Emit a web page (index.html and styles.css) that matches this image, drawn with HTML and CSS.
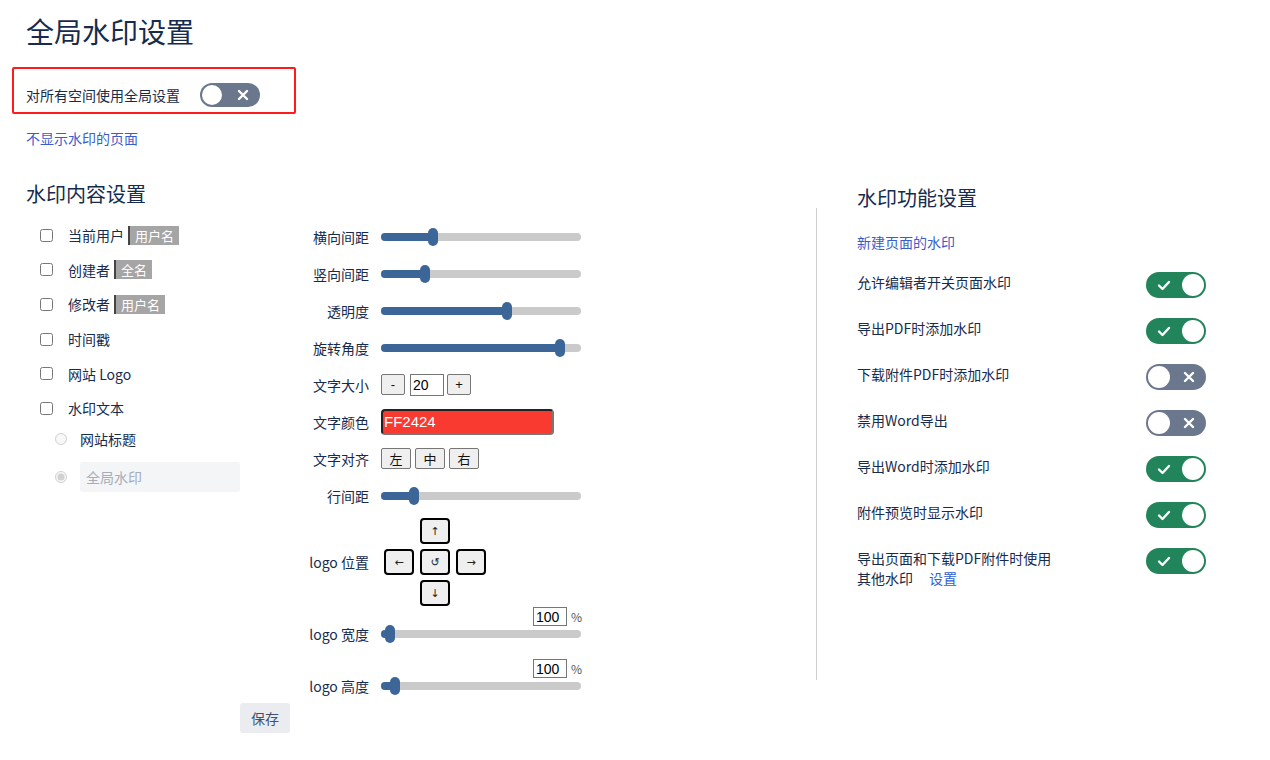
FILE: index.html
```html
<!DOCTYPE html>
<html lang="zh-CN">

<head>
    <meta charset="UTF-8">
    <meta name="viewport" content="width=device-width, initial-scale=1.0">
    <title>全局水印设置</title>
    <link rel="stylesheet" href="styles.css">
</head>

<body>
    <div class="page">
        <h1 class="page-title">全局水印设置</h1>

        <div class="global-switch">
            <span>对所有空间使用全局设置</span>
            <span class="toggle toggle-off toggle-sm">
                <span class="knob"></span>
                <svg class="toggle-icon" viewBox="0 0 20 20"><path d="M6 6 L14 14 M14 6 L6 14" /></svg>
            </span>
        </div>

        <a class="link exclude-link" href="#">不显示水印的页面</a>

        <div class="main">
            <section class="content-settings">
                <h2 class="section-title">水印内容设置</h2>

                <div class="content-body">
                    <div class="items">
                        <label class="item"><input type="checkbox"><span>当前用户</span><span class="tag">用户名</span></label>
                        <label class="item"><input type="checkbox"><span>创建者</span><span class="tag">全名</span></label>
                        <label class="item"><input type="checkbox"><span>修改者</span><span class="tag">用户名</span></label>
                        <label class="item"><input type="checkbox"><span>时间戳</span></label>
                        <label class="item"><input type="checkbox"><span>网站 Logo</span></label>
                        <label class="item"><input type="checkbox"><span>水印文本</span></label>

                        <div class="text-options">
                            <label class="radio-item"><input type="radio" name="wmText" disabled><span>网站标题</span></label>
                            <label class="radio-item"><input type="radio" name="wmText" checked disabled><input class="text-input" type="text" value="全局水印" disabled></label>
                        </div>
                    </div>

                    <div class="controls">
                        <div class="control-row">
                            <span class="control-label">横向间距</span>
                            <div class="slider"><div class="slider-fill" style="width: 26%"></div></div>
                        </div>
                        <div class="control-row">
                            <span class="control-label">竖向间距</span>
                            <div class="slider"><div class="slider-fill" style="width: 22%"></div></div>
                        </div>
                        <div class="control-row">
                            <span class="control-label">透明度</span>
                            <div class="slider"><div class="slider-fill" style="width: 63%"></div></div>
                        </div>
                        <div class="control-row">
                            <span class="control-label">旋转角度</span>
                            <div class="slider"><div class="slider-fill" style="width: 89.5%"></div></div>
                        </div>
                        <div class="control-row">
                            <span class="control-label">文字大小</span>
                            <div class="size-stepper">
                                <button class="btn-plain btn-step">-</button>
                                <input class="num-input" type="text" value="20">
                                <button class="btn-plain btn-step">+</button>
                            </div>
                        </div>
                        <div class="control-row">
                            <span class="control-label">文字颜色</span>
                            <input class="color-input" type="text" value="FF2424">
                        </div>
                        <div class="control-row">
                            <span class="control-label">文字对齐</span>
                            <div class="align-group">
                                <button class="btn-plain btn-align">左</button>
                                <button class="btn-plain btn-align">中</button>
                                <button class="btn-plain btn-align">右</button>
                            </div>
                        </div>
                        <div class="control-row">
                            <span class="control-label">行间距</span>
                            <div class="slider"><div class="slider-fill" style="width: 16.5%"></div></div>
                        </div>

                        <div class="control-row pad-row">
                            <span class="control-label">logo 位置</span>
                            <div class="arrow-pad">
                                <button class="arrow-btn up">↑</button>
                                <button class="arrow-btn left">←</button>
                                <button class="arrow-btn center">↺</button>
                                <button class="arrow-btn right">→</button>
                                <button class="arrow-btn down">↓</button>
                            </div>
                        </div>

                        <div class="control-row size-row">
                            <span class="control-label">logo 宽度</span>
                            <div class="size-cell">
                                <div class="percent-line"><input class="num-input percent-input" type="text" value="100"><span>%</span></div>
                                <div class="slider-wrap"><div class="slider"><div class="slider-fill" style="width: 4.5%"></div></div></div>
                            </div>
                        </div>
                        <div class="control-row size-row">
                            <span class="control-label">logo 高度</span>
                            <div class="size-cell">
                                <div class="percent-line"><input class="num-input percent-input" type="text" value="100"><span>%</span></div>
                                <div class="slider-wrap"><div class="slider"><div class="slider-fill" style="width: 7%"></div></div></div>
                            </div>
                        </div>
                    </div>
                </div>

                <button class="save-btn">保存</button>
            </section>

            <div class="divider"></div>

            <section class="feature-settings">
                <h2 class="section-title">水印功能设置</h2>
                <a class="link new-page-link" href="#">新建页面的水印</a>

                <div class="feature-list">
                    <div class="feature-row">
                        <span class="feature-text">允许编辑者开关页面水印</span>
                        <span class="toggle toggle-on">
                            <svg class="toggle-icon" viewBox="0 0 20 20"><path d="M5 10.5 L8.5 14 L15 7" /></svg>
                            <span class="knob"></span>
                        </span>
                    </div>
                    <div class="feature-row">
                        <span class="feature-text">导出PDF时添加水印</span>
                        <span class="toggle toggle-on">
                            <svg class="toggle-icon" viewBox="0 0 20 20"><path d="M5 10.5 L8.5 14 L15 7" /></svg>
                            <span class="knob"></span>
                        </span>
                    </div>
                    <div class="feature-row">
                        <span class="feature-text">下载附件PDF时添加水印</span>
                        <span class="toggle toggle-off">
                            <span class="knob"></span>
                            <svg class="toggle-icon" viewBox="0 0 20 20"><path d="M6 6 L14 14 M14 6 L6 14" /></svg>
                        </span>
                    </div>
                    <div class="feature-row">
                        <span class="feature-text">禁用Word导出</span>
                        <span class="toggle toggle-off">
                            <span class="knob"></span>
                            <svg class="toggle-icon" viewBox="0 0 20 20"><path d="M6 6 L14 14 M14 6 L6 14" /></svg>
                        </span>
                    </div>
                    <div class="feature-row">
                        <span class="feature-text">导出Word时添加水印</span>
                        <span class="toggle toggle-on">
                            <svg class="toggle-icon" viewBox="0 0 20 20"><path d="M5 10.5 L8.5 14 L15 7" /></svg>
                            <span class="knob"></span>
                        </span>
                    </div>
                    <div class="feature-row">
                        <span class="feature-text">附件预览时显示水印</span>
                        <span class="toggle toggle-on">
                            <svg class="toggle-icon" viewBox="0 0 20 20"><path d="M5 10.5 L8.5 14 L15 7" /></svg>
                            <span class="knob"></span>
                        </span>
                    </div>
                    <div class="feature-row">
                        <div class="feature-text">
                            <div>导出页面和下载PDF附件时使用</div>
                            <div class="feature-line"><span>其他水印</span><a class="link settings-link" href="#">设置</a></div>
                        </div>
                        <span class="toggle toggle-on">
                            <svg class="toggle-icon" viewBox="0 0 20 20"><path d="M5 10.5 L8.5 14 L15 7" /></svg>
                            <span class="knob"></span>
                        </span>
                    </div>
                </div>
            </section>
        </div>
    </div>
</body>

</html>
```

FILE: styles.css
```css
* {
    margin: 0;
    padding: 0;
    box-sizing: border-box;
}

body {
    font-family: "Noto Sans CJK SC", "Noto Sans", sans-serif;
    font-size: 14px;
    line-height: 20px;
    color: #172b4d;
    background: #fff;
}

.page {
    padding: 0 26px;
}

.page-title {
    margin-top: 13px;
    font-size: 28px;
    line-height: 36px;
    font-weight: 400;
}

.link {
    color: #3b5ccc;
    text-decoration: none;
}

/* 全局开关（红框） */
.global-switch {
    display: flex;
    align-items: center;
    gap: 20px;
    width: 284px;
    height: 47px;
    margin: 18px 0 0 -14px;
    padding: 12px 12px 3px;
    border: 2px solid #ff1b1b;
    border-radius: 2px;
}

.exclude-link {
    display: block;
    margin-top: 14px;
}

/* 开关 */
.toggle {
    display: inline-flex;
    align-items: center;
    justify-content: space-between;
    flex-shrink: 0;
    width: 60px;
    height: 26px;
    padding: 2px;
    border-radius: 13px;
}

.toggle-sm {
    height: 24px;
    border-radius: 12px;
}

.toggle-on {
    background: #22845a;
    padding-left: 8px;
}

.toggle-off {
    background: #6b778c;
    padding-right: 7px;
}

.knob {
    width: 22px;
    height: 22px;
    border-radius: 50%;
    background: #fff;
}

.toggle-sm .knob {
    width: 20px;
    height: 20px;
}

.toggle-icon {
    width: 20px;
    height: 20px;
    fill: none;
    stroke: #fff;
    stroke-width: 2.4;
    stroke-linecap: round;
    stroke-linejoin: round;
}

/* 主体 */
.main {
    display: flex;
    align-items: flex-start;
    margin-top: 32px;
}

.section-title {
    font-size: 20px;
    line-height: 28px;
    font-weight: 400;
}

.content-settings {
    width: 790px;
}

.content-body {
    display: flex;
    margin-top: 10px;
}

.items {
    width: 274px;
    padding-left: 14px;
}

.item {
    display: flex;
    align-items: center;
    height: 34.6px;
}

.item input[type="checkbox"] {
    width: 13px;
    height: 13px;
    margin: 0 15px 0 0;
}

.tag {
    margin-left: 4px;
    padding: 0 5px;
    font-size: 13px;
    line-height: 19px;
    color: #fff;
    background: #a5a5a5;
    border-left: 2px solid #444;
}

.text-options {
    display: flex;
    flex-direction: column;
    gap: 10px;
    padding-left: 15px;
}

.radio-item {
    display: flex;
    align-items: center;
    min-height: 26px;
}

.radio-item input[type="radio"] {
    width: 12px;
    height: 12px;
    margin: 0 13px 0 0;
}

.text-input {
    width: 160px;
    height: 30px;
    padding-left: 6px;
    border: none;
    border-radius: 3px;
    background: #f4f5f7;
    font-family: inherit;
    font-size: 14px;
    color: #a5adba;
}

/* 右侧控制 */
.controls {
    display: flex;
    flex-direction: column;
}

.control-row {
    display: flex;
    align-items: center;
    gap: 12px;
    height: 37px;
}

.control-label {
    width: 69px;
    text-align: right;
    white-space: nowrap;
}

.slider {
    position: relative;
    width: 200px;
    height: 8px;
    border-radius: 4px;
    background: #cacaca;
}

.slider-fill {
    position: relative;
    height: 100%;
    border-radius: 4px;
    background: #3d6698;
}

.slider-fill::after {
    content: "";
    position: absolute;
    right: -5px;
    top: -5px;
    width: 10px;
    height: 18px;
    border-radius: 5px;
    background: #3d6698;
}

.btn-plain {
    height: 21px;
    border: 1px solid #767676;
    border-radius: 2px;
    background: #efefef;
    font-family: "Noto Sans CJK SC", sans-serif;
    font-size: 13px;
    line-height: 19px;
    color: #111;
}

.size-stepper {
    display: flex;
    align-items: center;
}

.btn-step {
    width: 24px;
    font-family: "Liberation Sans", Arial, sans-serif;
}

.num-input {
    width: 34px;
    height: 22px;
    margin: 0 3px 0 5px;
    padding-left: 2px;
    border: 1px solid #767676;
    font-family: "Liberation Sans", Arial, sans-serif;
    font-size: 14px;
    color: #000;
}

.color-input {
    width: 173px;
    height: 26px;
    padding-left: 1px;
    border: 2px solid;
    border-color: #222 #777 #777 #222;
    border-radius: 4px;
    background: #f83a31;
    font-family: "Liberation Sans", Arial, sans-serif;
    font-size: 15px;
    color: #fff;
}

.align-group {
    display: flex;
    gap: 4px;
}

.btn-align {
    width: 30px;
}

.pad-row {
    height: auto;
    margin-top: 4px;
}

.arrow-pad {
    display: grid;
    grid-template-columns: repeat(3, 30px);
    grid-template-rows: repeat(3, 26px);
    column-gap: 6px;
    row-gap: 5px;
    margin-left: 3px;
}

.arrow-btn {
    border: 2px solid #000;
    border-radius: 4px;
    background: #efefef;
    font-family: "DejaVu Sans", sans-serif;
    font-size: 11px;
    color: #222;
}

.arrow-btn.up {
    grid-column: 2;
    grid-row: 1;
}

.arrow-btn.left {
    grid-column: 1;
    grid-row: 2;
}

.arrow-btn.center {
    grid-column: 2;
    grid-row: 2;
}

.arrow-btn.right {
    grid-column: 3;
    grid-row: 2;
}

.arrow-btn.down {
    grid-column: 2;
    grid-row: 3;
}

.size-row {
    height: auto;
    align-items: flex-end;
    margin-top: 1px;
}

.size-row + .size-row {
    margin-top: 17px;
}

.size-row .control-label {
    line-height: 16px;
}

.size-cell {
    width: 200px;
}

.percent-line {
    display: flex;
    justify-content: flex-end;
    align-items: center;
    height: 19px;
}

.percent-input {
    height: 19px;
    margin: 0 4px 0 0;
}

.percent-line span {
    width: 10px;
    font-size: 12px;
    color: #555;
}

.slider-wrap {
    display: flex;
    align-items: center;
    height: 16px;
}

.save-btn {
    display: block;
    width: 50px;
    height: 30px;
    margin: 9px 0 0 214px;
    border: none;
    border-radius: 3px;
    background: #ebecf0;
    font-family: inherit;
    font-size: 14px;
    color: #42526e;
}

.divider {
    width: 1px;
    height: 472px;
    margin-top: 28px;
    background: #cfcfcf;
}

/* 功能设置 */
.feature-settings {
    width: 349px;
    margin: 4px 0 0 40px;
}

.new-page-link {
    display: block;
    margin-top: 20px;
}

.feature-list {
    display: flex;
    flex-direction: column;
    gap: 20px;
    margin-top: 20px;
}

.feature-row {
    display: flex;
    justify-content: space-between;
    align-items: flex-start;
}

.feature-text {
    max-width: 200px;
    line-height: 20px;
}

.feature-line {
    display: flex;
    gap: 16px;
}

.settings-link {
    color: #2f5fd6;
}
```
